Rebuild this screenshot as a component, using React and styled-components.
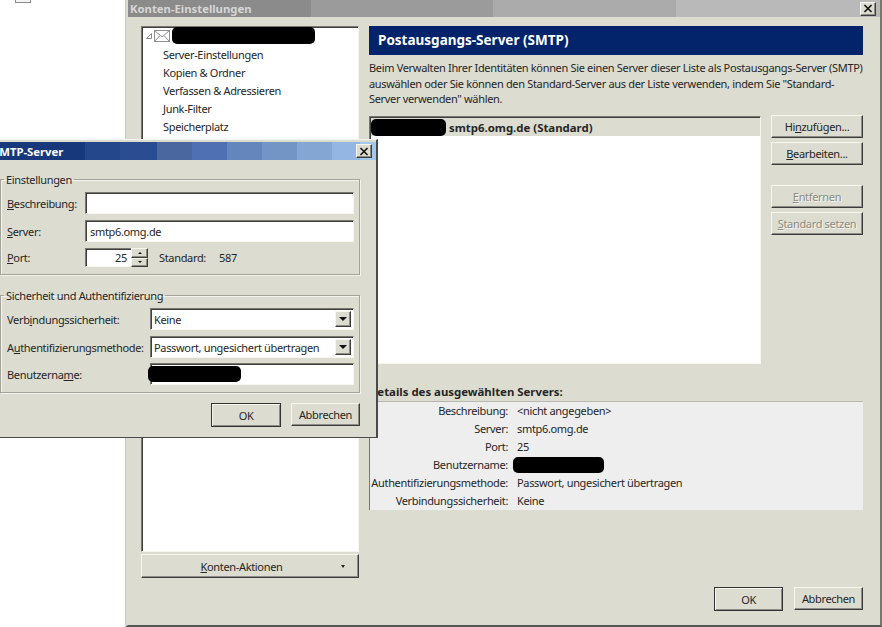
import React from "react";
import styled, { createGlobalStyle, css } from "styled-components";

const Global = createGlobalStyle`
  html, body { margin: 0; padding: 0; background: #fff; width: 882px; height: 627px; overflow: hidden; }
  * { box-sizing: border-box; }
  #root { font-family: "Noto Sans", "Liberation Sans", sans-serif; font-size: 11px; letter-spacing: -0.33px; color: #262626; }
  button { letter-spacing: inherit; }
  u { text-underline-offset: 1px; text-decoration-thickness: 1px; }
`;

const raised = css`
  background: #dcdcd0;
  border: 1px solid;
  border-color: #f7f7f0 #3c3c3c #3c3c3c #f7f7f0;
  box-shadow: inset -1px -1px #8e8e84;
`;
const sunken = css`
  background: #fff;
  border: 1px solid;
  border-color: #77776e #f6f6ee #f6f6ee #77776e;
  box-shadow: inset 1px 1px #3f3f3f;
`;
const boldText = css`font-weight: 700; letter-spacing: 0;`;

const Stage = styled.div`position: relative; width: 882px; height: 627px; overflow: hidden;`;
const Fragment = styled.div`
  position: absolute; left: 15px; top: -3px; width: 16px; height: 6px;
  border: 1px solid #8a8a8a; background: #f4f4f4;
`;

const MainWindow = styled.section`
  position: absolute; left: 125px; top: 0; width: 757px; height: 627px;
  display: flex; flex-direction: column;
  background: #dcdcd0;
  border-left: 3px solid #dcdcd0;
  border-right: 2px solid #77776f;
  border-bottom: 2px solid #555;
  &::before { content: ""; position: absolute; left: -3px; top: 0; bottom: 0; width: 1px; background: #c8c8c0; }
`;
const TitleBar = styled.header`
  height: 17px; flex: none; display: flex; align-items: center; justify-content: space-between;
  padding: 0 4px 0 2px; ${boldText} font-size: 11.3px; color: #d6d6d6;
`;
const MainTitleBar = styled(TitleBar)`
  background: linear-gradient(90deg, #8b8b8b 0 183px, #9b9b9b 183px 365px, #ababab 365px 548px, #b9b9b9 548px);
`;
const DialogTitleBar = styled(TitleBar)`
  height: 18px; color: #fff; padding-left: 0;
  background: linear-gradient(90deg,
    #17397b 0 92px, #23478a 92px 127px, #2c4c92 127px 164px, #4a689f 164px 199px,
    #4f70b2 199px 234px, #6486bc 234px 269px, #7395c6 269px 304px, #84a6d2 304px 339px,
    #93b6e2 339px 367px, #a2c8ec 367px);
`;
const CloseBox = styled.button`
  ${raised}
  width: 16px; height: 14px; padding: 0; display: flex; align-items: center; justify-content: center;
  svg { display: block; }
`;
const Close = () => (
  <CloseBox aria-label="Schließen">
    <svg width="10" height="9" viewBox="0 0 10 9"><path d="M1.5 1l7 7M8.5 1l-7 7" stroke="#111" strokeWidth="1.6" fill="none" /></svg>
  </CloseBox>
);

const Body = styled.div`flex: 1; display: flex; gap: 10px; padding: 9px 17px 14px 13px; min-height: 0;`;

const LeftColumn = styled.aside`width: 218px; flex: none; display: flex; flex-direction: column; gap: 2px; padding-bottom: 33px;`;
const Tree = styled.div`${sunken} flex: 1; padding: 0 0 0 2px;`;
const AccountRow = styled.div`display: flex; align-items: center; height: 17px; padding-left: 2px;`;
const TreeItems = styled.div`margin-top: 2px;`;
const TreeItem = styled.div`height: 18px; line-height: 18px; padding-left: 19px;`;

const Redaction = styled.span`
  display: inline-block; flex: none; background: #000; border-radius: 5px;
  width: ${p => p.$w}px; height: ${p => p.$h}px; margin-left: ${p => p.$ml || 0}px;
`;

const ActionsButton = styled.button`
  ${raised}
  height: 24px; flex: none; font: inherit; color: inherit; padding: 0 13px 0 0;
  display: grid; grid-template-columns: 1fr auto; align-items: center; text-align: center;
`;
const Arrow = styled.i`display: block; width: 0; height: 0; border-left: 2.5px solid transparent; border-right: 2.5px solid transparent; border-top: 3px solid #222;`;

const RightColumn = styled.main`flex: 1; min-width: 0; display: flex; flex-direction: column;`;
const PanelHeader = styled.h1`
  margin: 0; height: 29px; flex: none; background: #03246a; color: #fff; font-size: 13.5px; ${boldText}
  line-height: 29px; padding-left: 9px;
`;
const Description = styled.p`margin: 5px 0 10px; line-height: 15.5px; height: 46px; white-space: nowrap;`;
const ListArea = styled.div`display: flex; gap: 10px; height: 248px; flex: none;`;
const ServerList = styled.div`${sunken} width: 392px; padding: 1px 0 0 1px;`;
const ServerRow = styled.div`
  height: 18px; background: #dcdcd0; display: flex; align-items: center; gap: 3px; padding-left: 0;
  ${boldText} font-size: 11.4px;
`;
const ButtonColumn = styled.div`width: 92px; display: flex; flex-direction: column; margin-top: -1px;`;
const ButtonGroup = styled.div`display: flex; flex-direction: column; gap: 4px; & + & { margin-top: 20px; }`;
const PushButton = styled.button`
  ${raised}
  height: 23px; width: ${p => p.$w ? p.$w + "px" : "100%"}; padding: 0; font: inherit; color: ${p => p.disabled ? "#8c8c84" : "#262626"};
  ${p => p.disabled && "text-shadow: 1px 1px #f5f5ee;"}
  ${p => p.$default && css`
    height: 24px;
    border-color: #333;
    box-shadow: inset 1px 1px #f7f7f0, inset -1px -1px #8e8e84;
  `}
`;
const DetailsHeading = styled.h2`margin: 21px 0 3px; ${boldText} font-size: 11.4px; line-height: 13px; height: 13px;`;
const DetailsBox = styled.dl`
  margin: 0; height: 109px; padding-top: 1px; background: #eeeeee; border-left: 1px solid #77776e; border-top: 1px solid #b8b8b0;
  display: grid; grid-template-columns: 138px 1fr; column-gap: 9px; grid-auto-rows: 18px; align-items: start; line-height: 16px;
`;
const DetailLabel = styled.dt`text-align: right; white-space: nowrap;`;
const DetailValue = styled.dd`margin: 0; white-space: nowrap; display: flex; align-items: center; height: 16px;`;
const Footer = styled.footer`margin-top: auto; display: flex; justify-content: flex-end; gap: 11px;`;

const Dialog = styled.section`
  position: absolute; left: -8px; top: 139px; width: 386px; height: 299px;
  background: #dcdcd0; border: 1px solid; border-color: #f4f4ec #4a4a4a #4a4a4a #f4f4ec;
  border-right-width: 2px; padding-top: 2px; display: flex; flex-direction: column;
`;
const Group = styled.fieldset`
  margin: ${p => p.$mt}px 16px 0 7px; padding: ${p => p.$pt}px 5px 0 5px; height: ${p => p.$h}px;
  border: 1px solid #a3a399; box-shadow: 1px 1px #f4f4ec, inset 1px 1px #f4f4ec; min-width: 0;
  display: flex; flex-direction: column;
`;
const Legend = styled.legend`padding: 0 2px; margin-left: -2px; line-height: 13px;`;
const FormRow = styled.div`
  display: flex; align-items: center; height: ${p => p.$h}px; margin-bottom: ${p => p.$mb || 0}px;
`;
const FormLabel = styled.label`width: ${p => p.$w}px; flex: none; white-space: nowrap; padding-left: 1px;`;
const TextField = styled.div`
  ${sunken}
  flex: ${p => p.$w ? "none" : 1}; width: ${p => p.$w ? p.$w + "px" : "auto"}; height: 100%;
  display: flex; align-items: center; padding: 0 4px; white-space: nowrap;
  justify-content: ${p => p.$right ? "flex-end" : "flex-start"};
`;
const SpinBox = styled.div`display: flex; height: 100%;`;
const SpinButtons = styled.div`display: flex; flex-direction: column; width: 17px; height: 100%; margin-left: -1px;`;
const SpinStep = styled.span`
  ${raised} flex: 1; display: flex; align-items: center; justify-content: center;
`;
const Tri = styled.i`
  display: block; width: 0; height: 0; border-left: 2px solid transparent; border-right: 2px solid transparent;
  ${p => p.$up ? "border-bottom: 2px solid #111;" : "border-top: 2px solid #111;"}
`;
const StandardText = styled.span`margin-left: 11px; display: flex; gap: 13px;`;
const SelectBox = styled.div`${sunken} flex: 1; height: 100%; display: flex; align-items: center; justify-content: space-between; padding: 2px 2px 2px 3px; white-space: nowrap;`;
const SelectArrow = styled.span`${raised} width: 16px; height: 16px; display: flex; align-items: center; justify-content: center; flex: none;`;
const ArrowDown = styled.i`display: block; width: 0; height: 0; border-left: 4px solid transparent; border-right: 4px solid transparent; border-top: 4px solid #111;`;
const DialogFooter = styled.footer`display: flex; justify-content: flex-end; gap: 10px; margin: 10px 16px 0 0;`;

const EnvelopeIcon = styled.svg`margin-left: 2px; margin-right: 2px; flex: none;`;
const Envelope = () => (
  <EnvelopeIcon width="16" height="12" viewBox="0 0 16 12">
    <rect x=".5" y=".5" width="15" height="11" fill="#fff" stroke="#8f8f8f" />
    <path d="M.5.5L8 7l7.5-6.5M.5 11.5L6 5.5M15.5 11.5L10 5.5" fill="none" stroke="#8f8f8f" />
  </EnvelopeIcon>
);
const Twisty = () => (
  <svg width="6" height="6" viewBox="0 0 6 6"><path d="M5.5.5v5h-5z" fill="none" stroke="#8a8a8a" /></svg>
);

const details = [
  ["Beschreibung:", "<nicht angegeben>"],
  ["Server:", "smtp6.omg.de"],
  ["Port:", "25"],
  ["Benutzername:", null],
  ["Authentifizierungsmethode:", "Passwort, ungesichert übertragen"],
  ["Verbindungssicherheit:", "Keine"],
];

export default function App() {
  return (
    <Stage>
      <Global />
      <Fragment />
      <MainWindow>
        <MainTitleBar>Konten-Einstellungen<Close /></MainTitleBar>
        <Body>
          <LeftColumn>
            <Tree>
              <AccountRow><Twisty /><Envelope /><Redaction $w={143} $h={17} /></AccountRow>
              <TreeItems>
                <TreeItem>Server-Einstellungen</TreeItem>
                <TreeItem>Kopien &amp; Ordner</TreeItem>
                <TreeItem>Verfassen &amp; Adressieren</TreeItem>
                <TreeItem>Junk-Filter</TreeItem>
                <TreeItem>Speicherplatz</TreeItem>
              </TreeItems>
            </Tree>
            <ActionsButton><span><u>K</u>onten-Aktionen</span><Arrow /></ActionsButton>
          </LeftColumn>
          <RightColumn>
            <PanelHeader>Postausgangs-Server (SMTP)</PanelHeader>
            <Description>
              Beim Verwalten Ihrer Identitäten können Sie einen Server dieser Liste als Postausgangs-Server (SMTP)<br />
              auswählen oder Sie können den Standard-Server aus der Liste verwenden, indem Sie "Standard-<br />
              Server verwenden" wählen.
            </Description>
            <ListArea>
              <ServerList>
                <ServerRow><Redaction $w={75} $h={17} />smtp6.omg.de (Standard)</ServerRow>
              </ServerList>
              <ButtonColumn>
                <ButtonGroup>
                  <PushButton>Hi<u>n</u>zufügen...</PushButton>
                  <PushButton><u>B</u>earbeiten...</PushButton>
                </ButtonGroup>
                <ButtonGroup>
                  <PushButton disabled><u>E</u>ntfernen</PushButton>
                  <PushButton disabled><u>S</u>tandard setzen</PushButton>
                </ButtonGroup>
              </ButtonColumn>
            </ListArea>
            <DetailsHeading>Details des ausgewählten Servers:</DetailsHeading>
            <DetailsBox>
              {details.map(([label, value]) => (
                <React.Fragment key={label}>
                  <DetailLabel>{label}</DetailLabel>
                  <DetailValue>{value ?? <Redaction $w={91} $h={16} $ml={-4} />}</DetailValue>
                </React.Fragment>
              ))}
            </DetailsBox>
            <Footer>
              <PushButton $default $w={69}>OK</PushButton>
              <PushButton $w={69}>Abbrechen</PushButton>
            </Footer>
          </RightColumn>
        </Body>
      </MainWindow>

      <Dialog>
        <DialogTitleBar>SMTP-Server<Close /></DialogTitleBar>
        <Group $mt={13} $pt={6} $h={102}>
          <Legend>Einstellungen</Legend>
          <FormRow $h={22} $mb={6}>
            <FormLabel $w={79}><u>B</u>eschreibung:</FormLabel>
            <TextField />
          </FormRow>
          <FormRow $h={22} $mb={6}>
            <FormLabel $w={79}><u>S</u>erver:</FormLabel>
            <TextField>smtp6.omg.de</TextField>
          </FormRow>
          <FormRow $h={19}>
            <FormLabel $w={79}><u>P</u>ort:</FormLabel>
            <SpinBox>
              <TextField $w={47} $right>25</TextField>
              <SpinButtons>
                <SpinStep><Tri $up /></SpinStep>
                <SpinStep><Tri /></SpinStep>
              </SpinButtons>
            </SpinBox>
            <StandardText><span>Standard:</span><span>587</span></StandardText>
          </FormRow>
        </Group>
        <Group $mt={14} $pt={6} $h={104}>
          <Legend>Sicherheit und Authentifizierung</Legend>
          <FormRow $h={22} $mb={6}>
            <FormLabel $w={144}>Verb<u>i</u>ndungssicherheit:</FormLabel>
            <SelectBox>Keine<SelectArrow><ArrowDown /></SelectArrow></SelectBox>
          </FormRow>
          <FormRow $h={22} $mb={5}>
            <FormLabel $w={144}>A<u>u</u>thentifizierungsmethode:</FormLabel>
            <SelectBox>Passwort, ungesichert übertragen<SelectArrow><ArrowDown /></SelectArrow></SelectBox>
          </FormRow>
          <FormRow $h={22}>
            <FormLabel $w={144}>Benutzerna<u>m</u>e:</FormLabel>
            <TextField><Redaction $w={93} $h={16} $ml={-7} /></TextField>
          </FormRow>
        </Group>
        <DialogFooter>
          <PushButton $default $w={70}>OK</PushButton>
          <PushButton $w={69}>Abbrechen</PushButton>
        </DialogFooter>
      </Dialog>
    </Stage>
  );
}
